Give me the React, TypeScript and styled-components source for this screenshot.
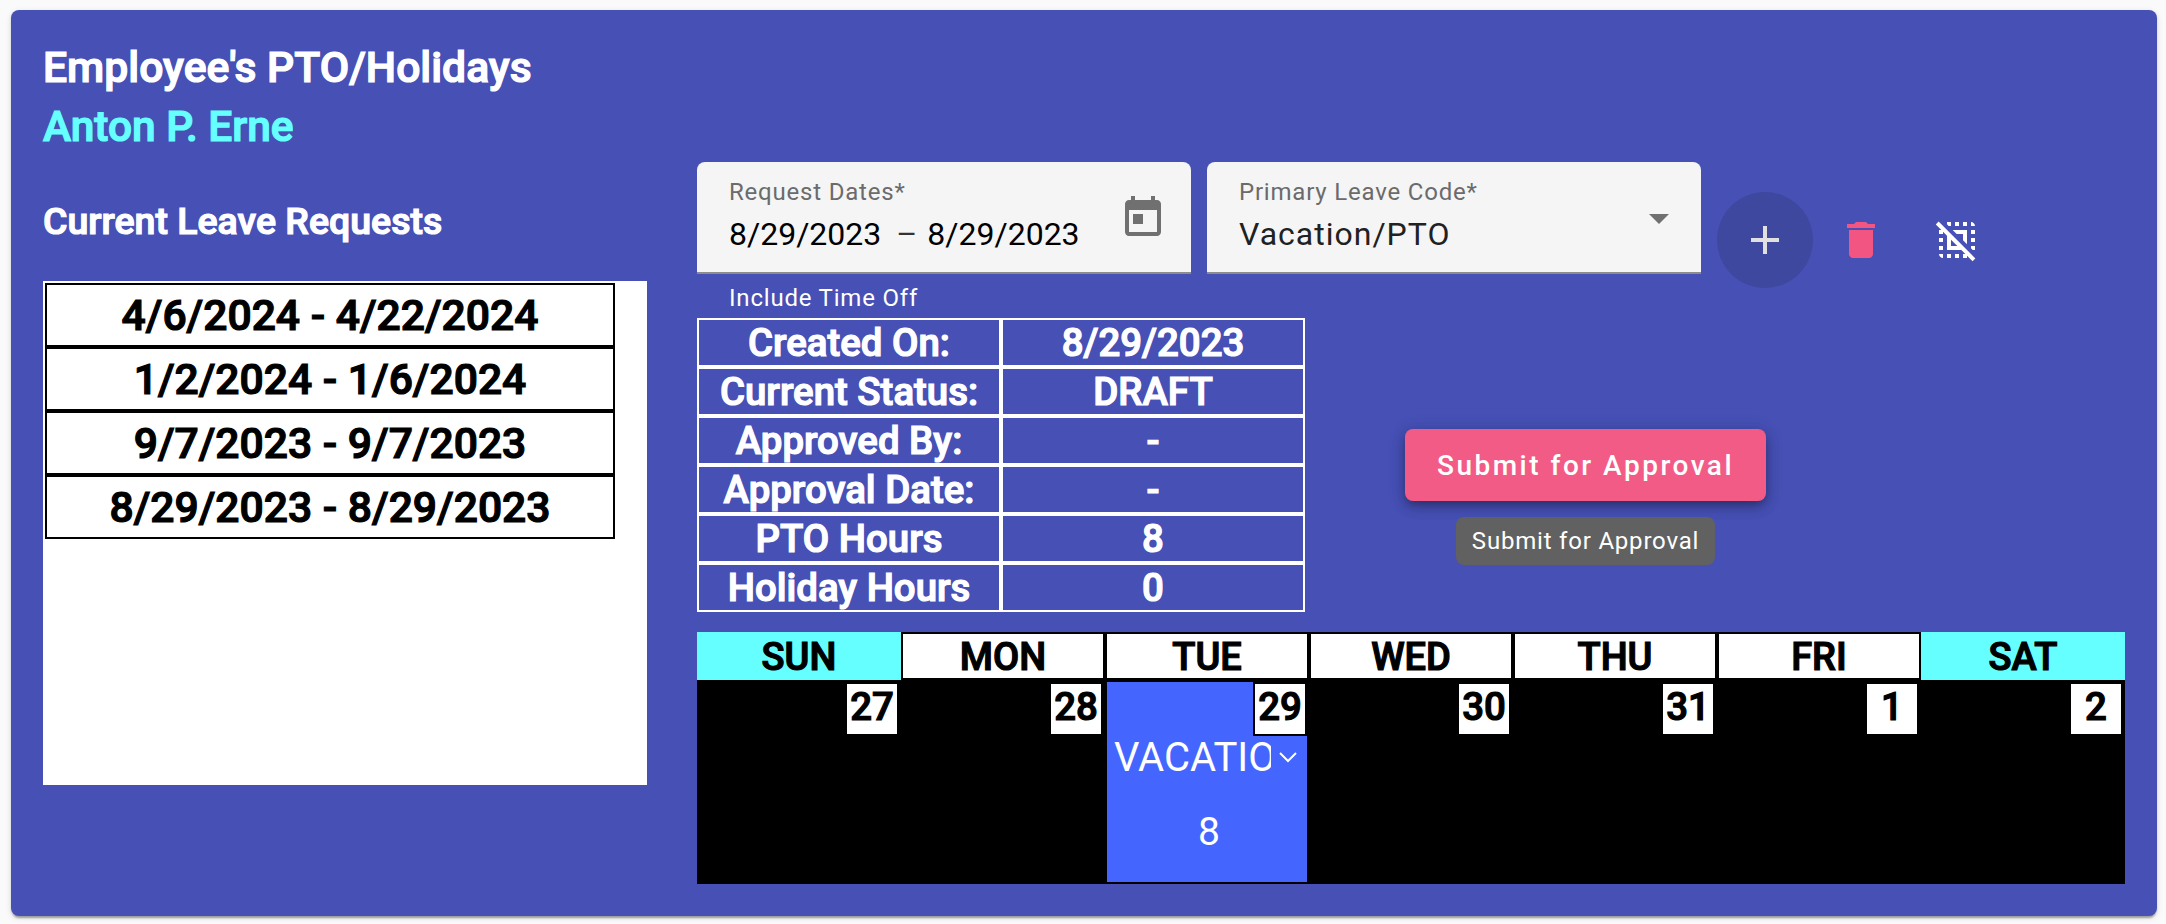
import React from "react";
import styled, { createGlobalStyle, css } from "styled-components";
import { MdAdd, MdDelete, MdDeselect } from "react-icons/md";

const GlobalStyle = createGlobalStyle`
  * { box-sizing: border-box; }
  body {
    margin: 0;
    background: #fafafa;
    font-family: Roboto, "Liberation Sans", sans-serif;
    -webkit-font-smoothing: antialiased;
  }
`;

const heavyText = css`
  font-weight: 500;
  -webkit-text-stroke: 1.2px currentColor;
`;

const Page = styled.div`
  height: 924px;
  padding: 10px 9px 8px 11px;
`;

const Card = styled.main`
  display: flex;
  gap: 50px;
  height: 906px;
  padding: 27px 32px 32px;
  border-radius: 8px;
  background: #4650b5;
  color: #fff;
  box-shadow: 0 4px 2px -2px rgba(0, 0, 0, 0.2), 0 2px 2px rgba(0, 0, 0, 0.14),
    0 2px 6px rgba(0, 0, 0, 0.12);
`;

const Sidebar = styled.section`
  width: 604px;
  flex: none;
`;

const Title = styled.h1<{ $accent?: boolean }>`
  ${heavyText}
  margin: 0;
  font-size: ${(p) => (p.$accent ? 42.4 : 42.7)}px;
  line-height: 60px;
  white-space: nowrap;
  color: ${(p) => (p.$accent ? "#66ffff" : "#fff")};
`;

const Subtitle = styled.h2`
  ${heavyText}
  margin: 34px 0 30px;
  font-size: 37.5px;
  line-height: 60px;
`;

const RequestList = styled.ul`
  height: 504px;
  margin: 0;
  padding: 2px 32px 2px 2px;
  list-style: none;
  background: #fff;
`;

const RequestItem = styled.li`
  ${heavyText}
  height: 64px;
  border: 2px solid #000;
  font-size: 42.6px;
  line-height: 60px;
  text-align: center;
  color: #000;
`;

const Content = styled.section`
  flex: 1;
  padding-top: 125px;
`;

const FormRow = styled.div`
  display: flex;
  align-items: flex-start;
  height: 156px;
`;

const FieldGroup = styled.div`
  width: 494px;
  margin-right: 16px;
`;

const Field = styled.div`
  display: flex;
  justify-content: space-between;
  height: 112px;
  padding: 16px 24px 0 32px;
  border-bottom: 2px solid #8c8c8c;
  border-radius: 8px 8px 0 0;
  background: #f5f5f5;
`;

const FieldLabel = styled.div`
  font-size: 24px;
  line-height: 28px;
  letter-spacing: 0.8px;
  color: #6b6b6b;
`;

const FieldValue = styled.div<{ $spacing?: number }>`
  margin-top: 4px;
  font-size: 32px;
  line-height: 48px;
  letter-spacing: ${(p) => p.$spacing ?? 0}px;
  color: ${(p) => (p.$spacing ? "#212121" : "#000")};
  white-space: nowrap;
`;

const Dash = styled.span`
  margin: 0 10px 0 15px;
  color: #333;
`;

const Hint = styled.div`
  padding: 9px 32px 0;
  font-size: 24px;
  line-height: 30px;
  letter-spacing: 0.8px;
`;

const CalendarGlyph = styled.svg`
  width: 48px;
  height: 48px;
  margin-top: 16px;
  fill: #707070;
`;

const CaretGlyph = styled.svg`
  width: 20px;
  height: 10px;
  margin: 36px 8px 0 0;
  fill: #707070;
`;

const IconButton = styled.button<{ $active?: boolean; $color: string }>`
  display: grid;
  place-items: center;
  width: 96px;
  height: 96px;
  margin-top: 30px;
  padding: 0;
  border: 0;
  border-radius: 50%;
  background: ${(p) => (p.$active ? "#3f489f" : "transparent")};
  color: ${(p) => p.$color};
  font-size: 48px;
`;

const SummaryRow = styled.div`
  display: flex;
  align-items: center;
`;

const Summary = styled.div`
  display: grid;
  grid-template-columns: 304px 304px;
`;

const SummaryCell = styled.div`
  ${heavyText}
  height: 49px;
  border: 2px solid #fff;
  font-size: 38.4px;
  line-height: 45px;
  text-align: center;
  white-space: nowrap;
`;

const SubmitArea = styled.div`
  position: relative;
  margin-left: 100px;
`;

const SubmitButton = styled.button`
  display: block;
  width: 361px;
  height: 72px;
  padding: 1px 0 0;
  border: 0;
  border-radius: 8px;
  background: #f35b87;
  color: #fff;
  font: 500 28px/71px Roboto, sans-serif;
  letter-spacing: 2.5px;
  text-align: center;
  box-shadow: 0 4px 8px -2px rgba(0, 0, 0, 0.25), 0 6px 14px rgba(0, 0, 0, 0.2),
    0 2px 20px rgba(0, 0, 0, 0.1);
`;

const Tooltip = styled.div`
  position: absolute;
  top: 88px;
  left: 51px;
  width: 259px;
  height: 48px;
  border-radius: 8px;
  background: #616161;
  font-size: 24px;
  line-height: 48px;
  letter-spacing: 0.8px;
  text-align: center;
  white-space: nowrap;
`;

const Calendar = styled.div`
  display: grid;
  grid-template-columns: repeat(7, 204px);
  margin-top: 20px;
`;

const DayName = styled.div<{ $weekend: boolean }>`
  ${heavyText}
  height: 48px;
  padding-top: 1px;
  border: 2px solid ${(p) => (p.$weekend ? "#66ffff" : "#000")};
  background: ${(p) => (p.$weekend ? "#66ffff" : "#fff")};
  color: #000;
  font-size: 38px;
  line-height: 44px;
  text-align: center;
`;

const Day = styled.div<{ $selected: boolean }>`
  height: 204px;
  border: 2px solid #000;
  background: ${(p) => (p.$selected ? "#4466ff" : "#000")};
`;

const DayNumber = styled.div`
  ${heavyText}
  width: 54px;
  height: 54px;
  margin-left: auto;
  border: 2px solid #000;
  background: #fff;
  color: #000;
  font-size: 38.4px;
  line-height: 45px;
  text-align: center;
`;

const LeaveSelect = styled.div`
  display: flex;
  align-items: center;
  height: 46px;
  margin-top: -2px;
  padding-left: 7px;
  font-size: 40px;
  line-height: 46px;
`;

const LeaveCode = styled.span`
  width: 157px;
  padding-top: 2px;
  overflow: hidden;
  white-space: nowrap;
`;

const Chevron = styled.svg`
  width: 18px;
  height: 11px;
  margin-left: 8px;
  fill: none;
  stroke: #fff;
  stroke-width: 2;
`;

const LeaveHours = styled.div`
  margin-top: 29px;
  padding-left: 4px;
  font-size: 39px;
  line-height: 46px;
  text-align: center;
`;

const requests = [
  "4/6/2024 - 4/22/2024",
  "1/2/2024 - 1/6/2024",
  "9/7/2023 - 9/7/2023",
  "8/29/2023 - 8/29/2023",
];

const summary: [string, string][] = [
  ["Created On:", "8/29/2023"],
  ["Current Status:", "DRAFT"],
  ["Approved By:", "-"],
  ["Approval Date:", "-"],
  ["PTO Hours", "8"],
  ["Holiday Hours", "0"],
];

const dayNames = ["SUN", "MON", "TUE", "WED", "THU", "FRI", "SAT"];
const days = [
  { date: 27 },
  { date: 28 },
  { date: 29, code: "VACATION", hours: 8 },
  { date: 30 },
  { date: 31 },
  { date: 1 },
  { date: 2 },
];

export default function App() {
  return (
    <Page>
      <GlobalStyle />
      <Card>
        <Sidebar>
          <Title>Employee's PTO/Holidays</Title>
          <Title $accent>Anton P. Erne</Title>
          <Subtitle>Current Leave Requests</Subtitle>
          <RequestList>
            {requests.map((r) => (
              <RequestItem key={r}>{r}</RequestItem>
            ))}
          </RequestList>
        </Sidebar>
        <Content>
          <FormRow>
            <FieldGroup>
              <Field>
                <div>
                  <FieldLabel>Request Dates*</FieldLabel>
                  <FieldValue>
                    8/29/2023<Dash>–</Dash>8/29/2023
                  </FieldValue>
                </div>
                <CalendarGlyph viewBox="0 0 24 24">
                  <path d="M19 3h-1V1h-2v2H8V1H6v2H5c-1.11 0-1.99.9-1.99 2L3 19c0 1.1.89 2 2 2h14c1.1 0 2-.9 2-2V5c0-1.1-.9-2-2-2zm0 16H5V8h14v11zM7 10h5v5H7z" />
                </CalendarGlyph>
              </Field>
              <Hint>Include Time Off</Hint>
            </FieldGroup>
            <FieldGroup>
              <Field>
                <div>
                  <FieldLabel>Primary Leave Code*</FieldLabel>
                  <FieldValue $spacing={1}>Vacation/PTO</FieldValue>
                </div>
                <CaretGlyph viewBox="0 0 20 10">
                  <path d="M0 0h20L10 10z" />
                </CaretGlyph>
              </Field>
            </FieldGroup>
            <IconButton $active $color="#e0e0e0" aria-label="Add request">
              <MdAdd />
            </IconButton>
            <IconButton $color="#f35583" aria-label="Delete request">
              <MdDelete />
            </IconButton>
            <IconButton $color="#fff" aria-label="Deselect request">
              <MdDeselect />
            </IconButton>
          </FormRow>
          <SummaryRow>
            <Summary>
              {summary.map(([label, value]) => (
                <React.Fragment key={label}>
                  <SummaryCell>{label}</SummaryCell>
                  <SummaryCell>{value}</SummaryCell>
                </React.Fragment>
              ))}
            </Summary>
            <SubmitArea>
              <SubmitButton>Submit for Approval</SubmitButton>
              <Tooltip role="tooltip">Submit for Approval</Tooltip>
            </SubmitArea>
          </SummaryRow>
          <Calendar>
            {dayNames.map((name, i) => (
              <DayName key={name} $weekend={i === 0 || i === 6}>
                {name}
              </DayName>
            ))}
            {days.map((day) => (
              <Day key={day.date} $selected={Boolean(day.code)}>
                <DayNumber>{day.date}</DayNumber>
                {day.code && (
                  <>
                    <LeaveSelect>
                      <LeaveCode>{day.code}</LeaveCode>
                      <Chevron viewBox="0 0 18 11">
                        <path d="M1 1l8 8 8-8" />
                      </Chevron>
                    </LeaveSelect>
                    <LeaveHours>{day.hours}</LeaveHours>
                  </>
                )}
              </Day>
            ))}
          </Calendar>
        </Content>
      </Card>
    </Page>
  );
}
